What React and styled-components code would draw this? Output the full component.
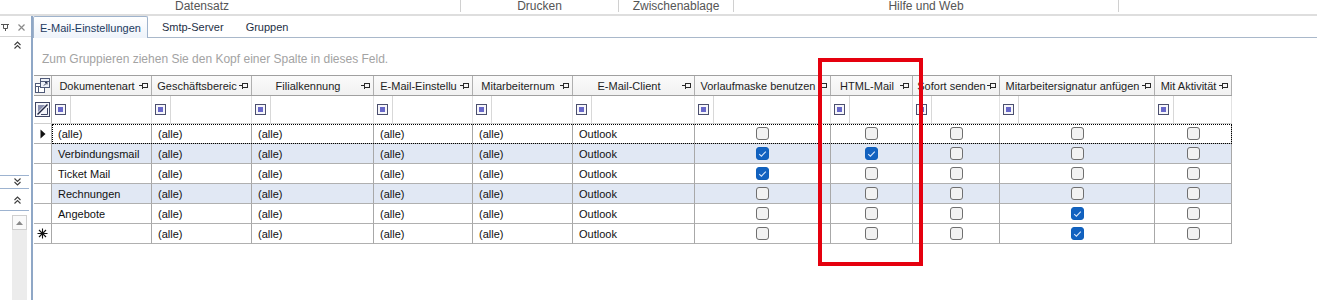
import React from "react";
import styled, { createGlobalStyle } from "styled-components";

const Global = createGlobalStyle`
  html, body { margin: 0; padding: 0; background: #fff; }
  body { font-family: "Liberation Sans", Arial, sans-serif; }
  * { box-sizing: border-box; }
`;

const Root = styled.div`
  position: relative;
  width: 1317px;
  height: 300px;
  overflow: hidden;
  background: #fff;
  display: flex;
  flex-direction: column;
`;

const Ribbon = styled.div`
  height: 16px;
  display: flex;
  background: #fff;
  border-bottom: 2px solid #dedede;
`;

const RibbonGroup = styled.div`
  width: ${(p) => p.$w}px;
  flex: ${(p) => (p.$w ? "none" : "1")};
  height: 12px;
  border-right: ${(p) => (p.$last ? "none" : "1px solid #d0d0d0")};
  display: flex;
  justify-content: ${(p) => (p.$left != null ? "flex-start" : "center")};
  padding-left: ${(p) => p.$left || 0}px;
  align-items: flex-end;
  font-size: 12px;
  line-height: 12px;
  color: #555;
  white-space: nowrap;
  overflow: hidden;
`;

const Body = styled.div`
  flex: 1;
  display: flex;
  min-height: 0;
`;

const SidePanel = styled.div`
  width: 31px;
  display: flex;
  flex-direction: column;
  background: #fff;
`;

const SideTop = styled.div`
  height: 21px;
  display: flex;
  align-items: center;
  gap: 8px;
  padding: 2px 0 0 1px;
  border-bottom: 1px solid #d6d6d6;
`;

const SideBar = styled.div`
  height: ${(p) => p.$h}px;
  display: flex;
  align-items: center;
  justify-content: flex-end;
  padding-right: 8px;
  border-bottom: 1px solid ${(p) => (p.$blue ? "#9db3d0" : "transparent")};
  border-top: 1px solid ${(p) => (p.$top ? "#9db3d0" : "transparent")};
  margin-right: 2px;
`;

const SideSpacer = styled.div`
  height: ${(p) => p.$h}px;
`;

const ScrollTrack = styled.div`
  flex: 1;
  margin: 4px 4px 0 12px;
  width: 15px;
  background: #ececec;
  display: flex;
  flex-direction: column;
`;

const ScrollBtn = styled.div`
  height: 15px;
  background: #fafafa;
  border: 1px solid #cfcfcf;
  display: flex;
  align-items: center;
  justify-content: center;
`;

const Main = styled.div`
  flex: 1;
  border-left: 2px solid #8fa7c6;
  display: flex;
  flex-direction: column;
  min-width: 0;
`;

const TabStrip = styled.div`
  height: 22px;
  display: flex;
  align-items: flex-end;
  border-bottom: 1px solid #a9b8ca;
`;

const Tab = styled.div`
  height: ${(p) => (p.$active ? "22px" : "21px")};
  padding: 0 ${(p) => (p.$active ? "6px" : "10px")};
  margin-right: ${(p) => (p.$active ? "3px" : "0")};
  margin-bottom: ${(p) => (p.$active ? "-1px" : "0")};
  display: flex;
  align-items: center;
  font-size: 11px;
  color: ${(p) => (p.$active ? "#1d3a5f" : "#1e2f45")};
  background: ${(p) => (p.$active ? "linear-gradient(#ffffff, #eef3fa)" : "transparent")};
  border: ${(p) => (p.$active ? "1px solid #9fb3cc" : "1px solid transparent")};
  border-bottom: none;
  border-radius: 2px 2px 0 0;
  white-space: nowrap;
`;

const GroupPanel = styled.div`
  height: 37px;
  padding: 13px 0 0 9px;
  font-size: 12px;
  line-height: 16px;
  color: #a3a3a3;
  white-space: nowrap;
`;

const Grid = styled.div`
  margin-left: 1px;
  width: 1198px;
  display: flex;
  flex-direction: column;
`;

const HeaderRow = styled.div`
  display: flex;
  height: 21px;
  border-top: 1px solid #a0a0a0;
  border-bottom: 1px solid #a0a0a0;
  background: linear-gradient(#fbfbfb, #f1f1f1);
`;

const HeaderCell = styled.div`
  width: ${(p) => p.$w}px;
  flex: none;
  display: flex;
  align-items: center;
  border-right: 1px solid #b0b0b0;
  padding: 0 3px 0 3px;
  font-size: 11px;
  color: #1e1e1e;
`;

const HeaderText = styled.div`
  flex: 1;
  min-width: 0;
  overflow: hidden;
  white-space: nowrap;
  text-align: center;
`;

const IndicatorHead = styled.div`
  width: 18px;
  flex: none;
  display: flex;
  align-items: center;
  justify-content: center;
  border-right: 1px solid #b0b0b0;
`;

const FilterRow = styled.div`
  display: flex;
  height: 28px;
  border-bottom: 1px solid #cfcfcf;
`;

const FilterCell = styled.div`
  width: ${(p) => p.$w}px;
  flex: none;
  display: flex;
  align-items: center;
  border-right: 1px solid #e2e2e2;
  padding-left: 3px;
`;

const FilterSep = styled.div`
  width: 1px;
  align-self: stretch;
  background: #d8d8d8;
  margin-left: 4px;
`;

const FilterBox = styled.div`
  width: 11px;
  height: 11px;
  border: 1px solid #4b4f6e;
  background: #f6f6fa;
  display: flex;
  align-items: center;
  justify-content: center;
  &::after {
    content: "";
    width: 5px;
    height: 5px;
    background: #6767c9;
  }
`;

const Row = styled.div`
  display: flex;
  height: 20px;
`;

const IndicatorCell = styled.div`
  width: 18px;
  flex: none;
  display: flex;
  align-items: center;
  justify-content: center;
  border-right: 1px solid #a8a8a8;
  border-bottom: 1px solid #b0b0b0;
  background: #fff;
`;

const RowCells = styled.div`
  display: flex;
  flex: 1;
  background: ${(p) => (p.$alt ? "#e1e8f4" : "#fff")};
  outline: ${(p) => (p.$focused ? "1px dotted #000" : "none")};
  outline-offset: -1px;
`;

const Cell = styled.div`
  width: ${(p) => p.$w}px;
  flex: none;
  display: flex;
  align-items: center;
  justify-content: ${(p) => (p.$center ? "center" : "flex-start")};
  padding-left: ${(p) => (p.$center ? 0 : 6)}px;
  border-right: 1px solid #a8a8a8;
  border-bottom: 1px solid #b0b0b0;
  font-size: 11px;
  color: #111;
  white-space: nowrap;
  overflow: hidden;
`;

const CheckBox = styled.div`
  width: 13px;
  height: 13px;
  border-radius: 3px;
  border: 1px solid ${(p) => (p.$on ? "#0f5fba" : "#6f6f6f")};
  background: ${(p) => (p.$on ? "#1262c0" : "#f2f2f2")};
  display: flex;
  align-items: center;
  justify-content: center;
`;

const Annotation = styled.div`
  position: absolute;
  left: 818px;
  top: 58px;
  width: 105px;
  height: 208px;
  border: 4px solid #e5000e;
  pointer-events: none;
`;

const Pin = () => (
  <svg width="9" height="7" viewBox="0 0 9 7" style={{ flex: "none" }}>
    <path d="M0 3.5H3.5M3.5 0.5V6.5M3.5 1.5H8.5V5.5H3.5" stroke="#2a2a2a" strokeWidth="1" fill="none" shapeRendering="crispEdges" />
  </svg>
);

const ChevronsUp = () => (
  <svg width="7" height="8" viewBox="0 0 7 8">
    <path d="M0.5 4L3.5 1L6.5 4M0.5 7.5L3.5 4.5L6.5 7.5" stroke="#3d3d3d" strokeWidth="1.1" fill="none" />
  </svg>
);

const ChevronsDown = () => (
  <svg width="7" height="8" viewBox="0 0 7 8">
    <path d="M0.5 0.5L3.5 3.5L6.5 0.5M0.5 4L3.5 7L6.5 4" stroke="#3d3d3d" strokeWidth="1.1" fill="none" />
  </svg>
);

const Check = () => (
  <svg width="9" height="8" viewBox="0 0 9 8">
    <path d="M1.2 4.2L3.4 6.2L7.8 1.6" stroke="#dbe9fb" strokeWidth="1.1" fill="none" />
  </svg>
);

const ColumnChooser = () => (
  <svg width="15" height="15" viewBox="0 0 15 15">
    <rect x="0.5" y="5.5" width="9" height="9" fill="#fff" stroke="#4f5a78" />
    <path d="M0.5 8.5H9.5M3.5 8.5V14.5" stroke="#4f5a78" />
    <rect x="5.5" y="0.5" width="9" height="9" fill="#eef1f8" stroke="#4f5a78" />
    <path d="M5.5 3.5H14.5" stroke="#4f5a78" />
    <path d="M9 7.5L12 4.5M10 4.5H12V6.5" stroke="#2c3552" fill="none" />
  </svg>
);

const FilterEdit = () => (
  <svg width="15" height="15" viewBox="0 0 15 15">
    <rect x="0.5" y="0.5" width="14" height="14" fill="#f4f5fa" stroke="#3e4564" />
    <path d="M2.5 12.5L12.5 2.5" stroke="#1f2540" strokeWidth="1.4" />
    <path d="M3 3H10L3 10Z" fill="#8a90b0" />
    <path d="M12.5 6V12.5H6" stroke="#3e4564" fill="none" />
  </svg>
);

const CurrentArrow = () => (
  <svg width="6" height="10" viewBox="0 0 6 10">
    <path d="M0.5 0.5L5.5 5L0.5 9.5Z" fill="#111" />
  </svg>
);

const NewRowStar = () => (
  <svg width="11" height="11" viewBox="0 0 11 11">
    <path d="M5.5 0.5V10.5M0.5 5.5H10.5M2 2L9 9M9 2L2 9" stroke="#111" strokeWidth="1.1" />
  </svg>
);

const PinSmall = () => (
  <svg width="9" height="8" viewBox="0 0 9 8">
    <path d="M0 1.5H8M2.5 1.5V5.5H6.5V1.5M4.5 5.5V8" stroke="#555" fill="none" />
  </svg>
);

const CloseX = () => (
  <svg width="7" height="7" viewBox="0 0 7 7">
    <path d="M0.5 0.5L6.5 6.5M6.5 0.5L0.5 6.5" stroke="#8a8a8a" strokeWidth="1.2" />
  </svg>
);

const ScrollUp = () => (
  <svg width="7" height="4" viewBox="0 0 7 4">
    <path d="M0 4L3.5 0L7 4Z" fill="#8a8a8a" />
  </svg>
);

const columns = [
  { title: "Dokumentenart", w: 100 },
  { title: "Geschäftsbereic", w: 100 },
  { title: "Filialkennung", w: 122 },
  { title: "E-Mail-Einstellu", w: 99 },
  { title: "Mitarbeiternum", w: 100 },
  { title: "E-Mail-Client", w: 122 },
  { title: "Vorlaufmaske benutzen", w: 136, check: true },
  { title: "HTML-Mail", w: 82, check: true },
  { title: "Sofort senden", w: 87, check: true },
  { title: "Mitarbeitersignatur anfügen", w: 155, check: true },
  { title: "Mit Aktivität", w: 77, check: true },
];

const A = "(alle)";
const rows = [
  { ind: "current", focused: true, v: [A, A, A, A, A, "Outlook", 0, 0, 0, 0, 0] },
  { alt: true, v: ["Verbindungsmail", A, A, A, A, "Outlook", 1, 1, 0, 0, 0] },
  { v: ["Ticket Mail", A, A, A, A, "Outlook", 1, 0, 0, 0, 0] },
  { alt: true, v: ["Rechnungen", A, A, A, A, "Outlook", 0, 0, 0, 0, 0] },
  { v: ["Angebote", A, A, A, A, "Outlook", 0, 0, 0, 1, 0] },
  { ind: "new", v: ["", A, A, A, A, "Outlook", 0, 0, 0, 1, 0] },
];

export default function App() {
  return (
    <Root>
      <Global />
      <Ribbon>
        <RibbonGroup $w={461} $left={175}>Datensatz</RibbonGroup>
        <RibbonGroup $w={158}>Drucken</RibbonGroup>
        <RibbonGroup $w={115}>Zwischenablage</RibbonGroup>
        <RibbonGroup $w={385}>Hilfe und Web</RibbonGroup>
        <RibbonGroup $last />
      </Ribbon>
      <Body>
        <SidePanel>
          <SideTop>
            <PinSmall />
            <CloseX />
          </SideTop>
          <SideBar $h={16}>
            <ChevronsUp />
          </SideBar>
          <SideSpacer $h={122} />
          <SideBar $h={14} $top $blue>
            <ChevronsDown />
          </SideBar>
          <SideBar $h={22} $blue>
            <ChevronsUp />
          </SideBar>
          <ScrollTrack>
            <ScrollBtn>
              <ScrollUp />
            </ScrollBtn>
          </ScrollTrack>
        </SidePanel>
        <Main>
          <TabStrip>
            <Tab $active>E-Mail-Einstellungen</Tab>
            <Tab>Smtp-Server</Tab>
            <Tab>Gruppen</Tab>
          </TabStrip>
          <GroupPanel>Zum Gruppieren ziehen Sie den Kopf einer Spalte in dieses Feld.</GroupPanel>
          <Grid>
            <HeaderRow>
              <IndicatorHead>
                <ColumnChooser />
              </IndicatorHead>
              {columns.map((c) => (
                <HeaderCell key={c.title} $w={c.w}>
                  <HeaderText>{c.title}</HeaderText>
                  <Pin />
                </HeaderCell>
              ))}
            </HeaderRow>
            <FilterRow>
              <IndicatorHead>
                <FilterEdit />
              </IndicatorHead>
              {columns.map((c) => (
                <FilterCell key={c.title} $w={c.w}>
                  <FilterBox />
                  <FilterSep />
                </FilterCell>
              ))}
            </FilterRow>
            {rows.map((r, i) => (
              <Row key={i}>
                <IndicatorCell>
                  {r.ind === "current" && <CurrentArrow />}
                  {r.ind === "new" && <NewRowStar />}
                </IndicatorCell>
                <RowCells $alt={r.alt} $focused={r.focused}>
                  {columns.map((c, j) => (
                    <Cell key={c.title} $w={c.w} $center={c.check}>
                      {c.check ? (
                        <CheckBox $on={!!r.v[j]}>{r.v[j] ? <Check /> : null}</CheckBox>
                      ) : (
                        r.v[j]
                      )}
                    </Cell>
                  ))}
                </RowCells>
              </Row>
            ))}
          </Grid>
        </Main>
      </Body>
      <Annotation />
    </Root>
  );
}
